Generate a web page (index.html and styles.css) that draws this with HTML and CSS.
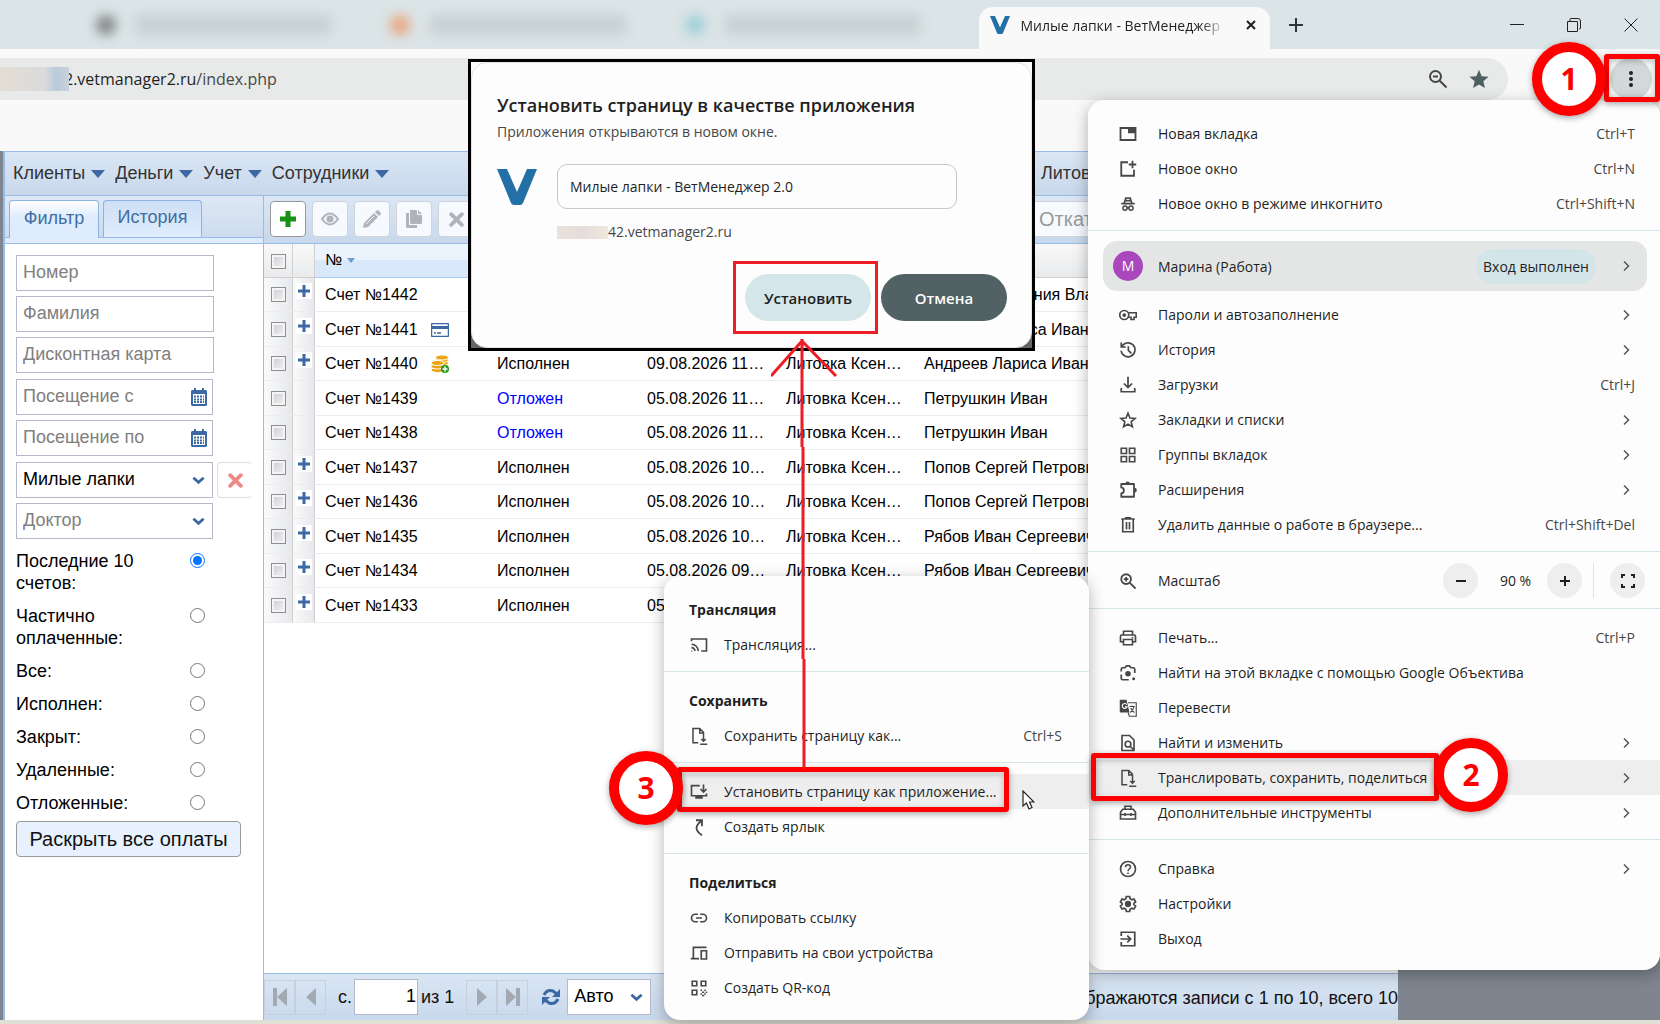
FILE: index.html
```html
<!DOCTYPE html>
<html lang="ru">
<head>
    <meta charset="UTF-8">
    <meta name="viewport" content="width=device-width, initial-scale=1.0">
    <title>Милые лапки - ВетМенеджер 2.0</title>
    <link rel="stylesheet" href="styles.css">
</head>
<body>
    <svg class="sprite" aria-hidden="true">
        <symbol id="chevron" viewBox="0 0 24 24"><path d="M8 3l9 9-9 9" fill="none" stroke="currentColor" stroke-width="3"/></symbol>
        <symbol id="logo" viewBox="0 0 40 36"><path d="M0 0h10l10 23L30 0h10L26 34q-1 2-3 2h-6q-2 0-3-2z" fill="#2270a5"/></symbol>
        <symbol id="plus" viewBox="0 0 12 12"><path d="M6 0v12M0 6h12" stroke="currentColor" stroke-width="3"/></symbol>
        <symbol id="calendar" viewBox="0 0 16 18"><path d="M1 2h2V0h2v2h6V0h2v2h2l1 1v14l-1 1H1l-1-1V3z" fill="#3c69a5"/><path d="M2 6h12v10H2z" fill="#fff"/><path d="M3 8.500h10M3 11.500h10M3 14h10" stroke="#3c69a5" stroke-width="2" stroke-dasharray="2 1"/></symbol>
        <symbol id="down" viewBox="0 0 14 9"><path d="M1.500 1.500L7 6.500l5.500-5" fill="none" stroke="#3c69a5" stroke-width="3"/></symbol>
        <symbol id="savepage" viewBox="0 0 24 24"><path d="M11 21H4V2h9l5 5v5M13 2v6h5M18 12v7M15 16l3 3 3-3M13.500 23H23" fill="none" stroke="currentColor" stroke-width="2"/></symbol>
    </svg>

    <header class="tabstrip">
        <div class="old-tabs">
            <span class="old-tab dim"></span>
            <span class="old-tab dark"></span>
            <span class="old-tab orange"></span>
            <span class="old-tab teal"></span>
        </div>
        <div class="tab">
            <svg class="tab-logo"><use href="#logo"/></svg>
            <span class="tab-title">Милые лапки - ВетМенеджер 2.0</span>
            <button class="plain" aria-label="Закрыть вкладку"><svg width="10" height="10" viewBox="0 0 10 10"><path d="M1 1l8 8M9 1L1 9" stroke="#1f1f1f" stroke-width="2"/></svg></button>
        </div>
        <button class="plain new-tab" aria-label="Новая вкладка"><svg width="14" height="14" viewBox="0 0 14 14"><path d="M7 0v14M0 7h14" stroke="#30383a" stroke-width="2"/></svg></button>
        <div class="window-buttons">
            <button class="plain" aria-label="Свернуть"><svg width="14" height="14" viewBox="0 0 14 14"><path d="M0 6.500h14" stroke="#222"/></svg></button>
            <button class="plain" aria-label="Восстановить"><svg width="14" height="14" viewBox="0 0 14 14"><path d="M.5 3.500h10v10H.5zM3 3V1.500Q3 .5 4 .5h7q2.500 0 2.500 2.500v7q0 1-1.500 1" fill="none" stroke="#222"/></svg></button>
            <button class="plain" aria-label="Закрыть"><svg width="14" height="14" viewBox="0 0 14 14"><path d="M.5.5l13 13M13.500.5l-13 13" stroke="#222"/></svg></button>
        </div>
    </header>

    <div class="toolbar">
        <div class="omnibox">
            <span class="masked"></span>
            <span class="url">2.vetmanager2.ru<span>/index.php</span></span>
            <svg class="zoom-icon" width="20" height="20" viewBox="0 0 20 20"><g fill="none" stroke="#474747" stroke-width="2"><circle cx="7.500" cy="7.500" r="5.500"/><path d="M11.500 11.500l7 7M5 7.500h5"/></g></svg>
            <svg width="20" height="20" viewBox="0 0 24 24"><path d="M12 1l3.200 7.600 8.300.7-6.300 5.400 1.900 8.100L12 18.500l-7.100 4.300 1.900-8.100L.5 9.300l8.300-.7z" fill="#4f6063"/></svg>
        </div>
        <button class="plain dots" aria-label="Меню"><svg width="4" height="18" viewBox="0 0 4 18"><g fill="#222"><circle cx="2" cy="3" r="2"/><circle cx="2" cy="9" r="2"/><circle cx="2" cy="15" r="2"/></g></svg></button>
    </div>

    <div class="bookmarks"></div>

    <main class="desktop">
        <div class="app">
            <nav class="menubar">
                <button class="menu-btn">Клиенты</button>
                <button class="menu-btn">Деньги</button>
                <button class="menu-btn">Учет</button>
                <button class="menu-btn">Сотрудники</button>
                <a class="user" href="#">Литовка Ксения</a>
            </nav>
            <div class="content">
                <aside class="sidebar">
                    <div class="tabs">
                        <button class="side-tab active">Фильтр</button>
                        <button class="side-tab">История</button>
                    </div>
                    <form class="filter">
                        <div class="fields">
                            <input class="field" type="text" aria-label="Номер" placeholder="Номер">
                            <input class="field" type="text" aria-label="Фамилия" placeholder="Фамилия">
                            <input class="field" type="text" aria-label="Дисконтная карта" placeholder="Дисконтная карта">
                        </div>
                        <div class="fields">
                            <div class="with-icon"><input class="field" type="text" aria-label="Посещение с" placeholder="Посещение с"><svg class="cal"><use href="#calendar"/></svg></div>
                            <div class="with-icon"><input class="field" type="text" aria-label="Посещение по" placeholder="Посещение по"><svg class="cal"><use href="#calendar"/></svg></div>
                        </div>
                        <div class="fields">
                            <div class="clinic">
                                <div class="with-icon"><select class="field" aria-label="Клиника"><option>Милые лапки</option></select><svg class="arrow"><use href="#down"/></svg></div>
                                <button type="button" class="reset" aria-label="Очистить"><svg width="15" height="15" viewBox="0 0 14 14"><path d="M2 2l10 10M12 2L2 12" stroke="#ee8a86" stroke-width="3.500" stroke-linecap="round"/></svg></button>
                            </div>
                            <div class="with-icon"><select class="field empty" aria-label="Доктор"><option>Доктор</option></select><svg class="arrow"><use href="#down"/></svg></div>
                        </div>
                        <div class="radios">
                            <label><span>Последние 10 счетов:</span><input type="radio" name="state" checked></label>
                            <label><span>Частично оплаченные:</span><input type="radio" name="state"></label>
                            <label><span>Все:</span><input type="radio" name="state"></label>
                            <label><span>Исполнен:</span><input type="radio" name="state"></label>
                            <label><span>Закрыт:</span><input type="radio" name="state"></label>
                            <label><span>Удаленные:</span><input type="radio" name="state"></label>
                            <label><span>Отложенные:</span><input type="radio" name="state"></label>
                        </div>
                        <button type="button" class="expand">Раскрыть все оплаты</button>
                    </form>
                </aside>

                <section class="grid">
                    <div class="grid-tools">
                        <button class="tool add" aria-label="Добавить"><svg width="16" height="16" viewBox="0 0 16 16"><path d="M8 0v16M0 8h16" stroke="#199316" stroke-width="5"/></svg></button>
                        <button class="tool" aria-label="Просмотр"><svg width="18" height="14" viewBox="0 0 18 14"><path d="M1 7q8-11 16 0-8 11-16 0z" fill="#f4f6fa" stroke="#b0b4b9" stroke-width="2"/><circle cx="9" cy="7" r="3.500" fill="#b0b4b9"/></svg></button>
                        <button class="tool" aria-label="Изменить"><svg width="18" height="18" viewBox="0 0 18 18"><path d="M0 18l1-5L11 3l4 4L5 17zM12 2l1.500-1.500q1-1 2 0l2 2q1 1 0 2L16 6z" fill="#b0b4b9"/><path d="M3 14l8-8" stroke="#f4f6fa"/></svg></button>
                        <button class="tool" aria-label="Копировать"><svg width="16" height="18" viewBox="0 0 16 18"><path d="M0 3h3v12h8v3H1l-1-1zM4 0h7v5h5v8l-1 1H5l-1-1zM12 0l4 4h-4z" fill="#b0b4b9"/></svg></button>
                        <button class="tool" aria-label="Удалить"><svg width="15" height="15" viewBox="0 0 14 14"><path d="M2 2l10 10M12 2L2 12" stroke="#b0b4b9" stroke-width="3.500" stroke-linecap="round"/></svg></button>
                        <button class="tool rollback">Откатить</button>
                    </div>
                    <div class="grid-body">
                        <table>
                            <colgroup><col class="c-check"><col class="c-plus"><col class="c-num"><col class="c-status"><col class="c-date"><col class="c-doc"><col></colgroup>
                            <thead>
                                <tr><th><input type="checkbox" aria-label="Выбрать все"></th><th></th><th class="sorted">№</th><th class="sorted"></th><th class="sorted"></th><th></th><th></th></tr>
                            </thead>
                            <tbody>
                                <tr><td><input type="checkbox" aria-label="1442"></td><td><svg class="plus"><use href="#plus"/></svg></td><td>Счет №1442</td><td></td><td></td><td></td><td>Соколова Евгения Владимировна</td></tr>
                                <tr><td><input type="checkbox" aria-label="1441"></td><td><svg class="plus"><use href="#plus"/></svg></td><td>Счет №1441 <svg class="mark" width="18" height="14" viewBox="0 0 18 14"><rect x=".5" y=".5" width="17" height="13" rx="1" fill="#fff" stroke="#3c69a5" stroke-width="1.500"/><path d="M1 4.500h16" stroke="#3c69a5" stroke-width="3"/><path d="M3 10h2M6 10h4" stroke="#3c69a5" stroke-width="1.500"/></svg></td><td></td><td></td><td></td><td>Андреев Лариса Иванович</td></tr>
                                <tr><td><input type="checkbox" aria-label="1440"></td><td><svg class="plus"><use href="#plus"/></svg></td><td>Счет №1440 <svg class="mark" width="18" height="18" viewBox="0 0 18 18"><g fill="#eba50c" stroke="#fff"><ellipse cx="11" cy="11" rx="6.500" ry="2.500"/><ellipse cx="11" cy="8" rx="6.500" ry="2.500"/><ellipse cx="11" cy="5" rx="6.500" ry="2.500"/><ellipse cx="11" cy="2.500" rx="6.500" ry="2.500"/><ellipse cx="6.500" cy="15" rx="6.500" ry="2.500"/><ellipse cx="6.500" cy="11.500" rx="6.500" ry="2.500"/><ellipse cx="6.500" cy="8" rx="6.500" ry="2.500"/></g><circle cx="14" cy="14" r="4" fill="#2a9a22"/><path d="M14 11.500v5M11.500 14h5" stroke="#fff" stroke-width="1.500"/></svg></td><td>Исполнен</td><td>09.08.2026 11:40</td><td>Литовка Ксения Олеговна</td><td>Андреев Лариса Иванович</td></tr>
                                <tr><td><input type="checkbox" aria-label="1439"></td><td></td><td>Счет №1439</td><td class="hold">Отложен</td><td>05.08.2026 11:35</td><td>Литовка Ксения Олеговна</td><td>Петрушкин Иван</td></tr>
                                <tr><td><input type="checkbox" aria-label="1438"></td><td></td><td>Счет №1438</td><td class="hold">Отложен</td><td>05.08.2026 11:20</td><td>Литовка Ксения Олеговна</td><td>Петрушкин Иван</td></tr>
                                <tr><td><input type="checkbox" aria-label="1437"></td><td><svg class="plus"><use href="#plus"/></svg></td><td>Счет №1437</td><td>Исполнен</td><td>05.08.2026 10:58</td><td>Литовка Ксения Олеговна</td><td>Попов Сергей Петрович</td></tr>
                                <tr><td><input type="checkbox" aria-label="1436"></td><td><svg class="plus"><use href="#plus"/></svg></td><td>Счет №1436</td><td>Исполнен</td><td>05.08.2026 10:43</td><td>Литовка Ксения Олеговна</td><td>Попов Сергей Петрович</td></tr>
                                <tr><td><input type="checkbox" aria-label="1435"></td><td><svg class="plus"><use href="#plus"/></svg></td><td>Счет №1435</td><td>Исполнен</td><td>05.08.2026 10:05</td><td>Литовка Ксения Олеговна</td><td>Рябов Иван Сергеевич</td></tr>
                                <tr><td><input type="checkbox" aria-label="1434"></td><td><svg class="plus"><use href="#plus"/></svg></td><td>Счет №1434</td><td>Исполнен</td><td>05.08.2026 09:50</td><td>Литовка Ксения Олеговна</td><td>Рябов Иван Сергеевич</td></tr>
                                <tr><td><input type="checkbox" aria-label="1433"></td><td><svg class="plus"><use href="#plus"/></svg></td><td>Счет №1433</td><td>Исполнен</td><td>05.08.2026 09:31</td><td></td><td></td></tr>
                            </tbody>
                        </table>
                    </div>
                    <footer class="pager">
                        <button class="page-btn" aria-label="Первая"><svg width="14" height="18" viewBox="0 0 14 18"><path d="M0 0h4v18H0zM14 0v18L4 9z" fill="#a3a9b2"/></svg></button>
                        <button class="page-btn" aria-label="Назад"><svg width="10" height="18" viewBox="0 0 10 18"><path d="M10 0v18L0 9z" fill="#a3a9b2"/></svg></button>
                        <label class="page-no">с. <input class="field" type="text" value="1"></label>
                        <span class="page-of">из 1</span>
                        <button class="page-btn" aria-label="Вперед"><svg width="10" height="18" viewBox="0 0 10 18"><path d="M0 0v18l10-9z" fill="#a3a9b2"/></svg></button>
                        <button class="page-btn" aria-label="Последняя"><svg width="14" height="18" viewBox="0 0 14 18"><path d="M14 0h-4v18h4zM0 0v18l10-9z" fill="#a3a9b2"/></svg></button>
                        <button class="plain refresh" aria-label="Обновить"><svg width="18" height="18" viewBox="0 0 18 18"><g fill="none" stroke="#3c69a5" stroke-width="3"><path d="M2 7q3-6 9-4l4 3M16 11q-3 6-9 4l-4-3"/></g><path d="M18 1v8h-8zM0 17V9h8z" fill="#3c69a5"/></svg></button>
                        <div class="with-icon auto"><select class="field" aria-label="Строк"><option>Авто</option></select><svg class="arrow"><use href="#down"/></svg></div>
                        <span class="total">Отображаются записи с 1 по 10, всего 10</span>
                    </footer>
                </section>
            </div>
        </div>
    </main>

    <div class="menu main-menu">
        <button class="item"><svg class="icon" viewBox="0 0 24 24"><path d="M2 4h20v16H2z" fill="none" stroke="currentColor" stroke-width="2.400"/><path d="M12 4h10v7H12z" fill="currentColor"/></svg>Новая вкладка<kbd>Ctrl+T</kbd></button>
        <button class="item"><svg class="icon" viewBox="0 0 24 24"><path d="M12 3H3v18h17v-8M18 1v10M13 6h10" fill="none" stroke="currentColor" stroke-width="2.400"/></svg>Новое окно<kbd>Ctrl+N</kbd></button>
        <button class="item"><svg class="icon" viewBox="0 0 24 24"><path d="M3 11.500h18M7 11L9 4h6l2 7M8 7.500h8M10 17h4" fill="none" stroke="currentColor" stroke-width="2.200"/><g fill="none" stroke="currentColor" stroke-width="2"><circle cx="8" cy="17.500" r="2.700"/><circle cx="16" cy="17.500" r="2.700"/></g></svg>Новое окно в режиме инкогнито<kbd>Ctrl+Shift+N</kbd></button>
        <hr>
        <button class="profile"><span class="avatar">М</span>Марина (Работа)<span class="signed">Вход выполнен</span><svg class="chev"><use href="#chevron"/></svg></button>
        <button class="item"><svg class="icon" viewBox="0 0 24 24"><g fill="none" stroke="currentColor" stroke-width="2.200"><circle cx="7" cy="12" r="6"/><path d="M12.500 9H23v6h-3v3h-4v-3h-3.500"/></g><circle cx="7" cy="12" r="2.500" fill="currentColor"/></svg>Пароли и автозаполнение<svg class="chev"><use href="#chevron"/></svg></button>
        <button class="item"><svg class="icon" viewBox="0 0 24 24"><path d="M3 2v6h6M3.500 8a9.300 9.300 0 1 1-.7 5M12.500 7v5.500l4 4" fill="none" stroke="currentColor" stroke-width="2.200"/></svg>История<svg class="chev"><use href="#chevron"/></svg></button>
        <button class="item"><svg class="icon" viewBox="0 0 24 24"><path d="M12 1v14M6.500 10l5.500 5.500L17.500 10M3 16v5h18v-5" fill="none" stroke="currentColor" stroke-width="2.300"/></svg>Загрузки<kbd>Ctrl+J</kbd></button>
        <button class="item"><svg class="icon" viewBox="0 0 24 24"><path d="M12 3l2.600 6.300 6.800.6-5.200 4.500 1.600 6.600-5.800-3.500L6.200 21l1.600-6.600-5.200-4.500 6.800-.6z" fill="none" stroke="currentColor" stroke-width="2.200"/></svg>Закладки и списки<svg class="chev"><use href="#chevron"/></svg></button>
        <button class="item"><svg class="icon" viewBox="0 0 24 24"><path d="M3 3h7v7H3zM14 3h7v7h-7zM3 14h7v7H3zM14 14h7v7h-7z" fill="none" stroke="currentColor" stroke-width="2.200"/></svg>Группы вкладок<svg class="chev"><use href="#chevron"/></svg></button>
        <button class="item"><svg class="icon" viewBox="0 0 24 24"><path d="M3 4h17v17H3v-4.500q3.500-.5 3.500-4T3 8.500z" fill="none" stroke="currentColor" stroke-width="2.400" stroke-linejoin="round"/><path d="M8.500 3.500a3 3 0 0 1 6 0zM20.500 9a3 3 0 0 1 0 6.500z" fill="currentColor"/></svg>Расширения<svg class="chev"><use href="#chevron"/></svg></button>
        <button class="item"><svg class="icon" viewBox="0 0 24 24"><path d="M5 5v16h14V5M3 4h18M8 2.500h8M10 8v10M14 8v10" fill="none" stroke="currentColor" stroke-width="2.200"/></svg>Удалить данные о работе в браузере...<kbd>Ctrl+Shift+Del</kbd></button>
        <hr>
        <div class="item zoom-row">
            <svg class="icon" viewBox="0 0 24 24"><path d="M14.500 14.500l7.500 7.500M9.500 6.500v6M6.500 9.500h6" fill="none" stroke="currentColor" stroke-width="2.400"/><circle cx="9.500" cy="9.500" r="6.500" fill="none" stroke="currentColor" stroke-width="2.400"/></svg>Масштаб
            <div class="zoom-controls">
                <button class="round" aria-label="Уменьшить"><svg width="12" height="12" viewBox="0 0 12 12"><path d="M1 6h10" stroke="#1f1f1f" stroke-width="2"/></svg></button>
                <span class="percent">90 %</span>
                <button class="round" aria-label="Увеличить"><svg width="12" height="12" viewBox="0 0 12 12"><path d="M6 1v10M1 6h10" stroke="#1f1f1f" stroke-width="2"/></svg></button>
                <span class="bar"></span>
                <button class="round" aria-label="На весь экран"><svg width="16" height="16" viewBox="0 0 16 16"><path d="M2 5V2h3M11 2h3v3M14 11v3h-3M5 14H2v-3" fill="none" stroke="#1f1f1f" stroke-width="2"/></svg></button>
            </div>
        </div>
        <hr>
        <button class="item"><svg class="icon" viewBox="0 0 24 24"><path d="M6 8V3h12v5M6 17H2V9.500Q2 8 3.500 8h17Q22 8 22 9.500V17h-4M6 14h12v7H6z" fill="none" stroke="currentColor" stroke-width="2.200"/><path d="M17 10.500h2v2h-2z" fill="currentColor"/></svg>Печать...<kbd>Ctrl+P</kbd></button>
        <button class="item"><svg class="icon" viewBox="0 0 24 24"><path d="M3 10V7q0-2 2-2h3l2-2.500h4L16 5h3q2 0 2 2v5M3 14v5q0 2 2 2h8" fill="none" stroke="currentColor" stroke-width="2.300"/><circle cx="12" cy="13" r="3.700" fill="currentColor"/><circle cx="19.500" cy="19.500" r="2" fill="currentColor"/></svg>Найти на этой вкладке с помощью Google Объектива</button>
        <button class="item"><svg class="icon" viewBox="0 0 24 24"><path d="M1 1h9l4 17H2q-1 0-1-1z" fill="currentColor"/><path d="M10.500 7.500a3.300 3.300 0 1 0 .3 3H8" fill="none" stroke="#fdfdfd" stroke-width="1.500"/><path d="M12 5h11v18h-9l-2-5M14 10h7M17.500 8.500V10M20 10q-1 5-5 8M15.500 12q2 4 5 6" fill="none" stroke="currentColor" stroke-width="1.500"/></svg>Перевести</button>
        <button class="item"><svg class="icon" viewBox="0 0 24 24"><path d="M14 2H4v20h16V8zM15.500 17l4 4" fill="none" stroke="currentColor" stroke-width="2.200"/><circle cx="12" cy="13.500" r="3.800" fill="none" stroke="currentColor" stroke-width="2.200"/></svg>Найти и изменить<svg class="chev"><use href="#chevron"/></svg></button>
        <button class="item hover"><svg class="icon"><use href="#savepage"/></svg>Транслировать, сохранить, поделиться<svg class="chev"><use href="#chevron"/></svg></button>
        <button class="item"><svg class="icon" viewBox="0 0 24 24"><path d="M8 7V3h8v4M5 7h14l3 4v9H2v-9zM2 14h20M8 12v4M16 12v4" fill="none" stroke="currentColor" stroke-width="2.200"/></svg>Дополнительные инструменты<svg class="chev"><use href="#chevron"/></svg></button>
        <hr>
        <button class="item"><svg class="icon" viewBox="0 0 24 24"><circle cx="12" cy="12" r="10" fill="none" stroke="currentColor" stroke-width="2.200"/><path d="M8.700 9.500q0-3.300 3.300-3.300t3.300 3q0 1.500-1.700 2.800T12 15M12 16.500v2.300" fill="none" stroke="currentColor" stroke-width="2"/></svg>Справка<svg class="chev"><use href="#chevron"/></svg></button>
        <button class="item"><svg class="icon" viewBox="0 0 24 24"><path d="M9.800 2h4.400l.6 3 2.300 1.300 2.900-1 2.200 3.800-2.300 2v1.800l2.300 2-2.200 3.800-2.900-1-2.300 1.300-.6 3H9.800l-.6-3-2.300-1.300-2.900 1-2.200-3.800 2.300-2v-1.800l-2.300-2L4 5.300l2.900 1L9.200 5z" fill="none" stroke="currentColor" stroke-width="2.200"/><circle cx="12" cy="12" r="4.200" fill="currentColor"/></svg>Настройки</button>
        <button class="item"><svg class="icon" viewBox="0 0 24 24"><path d="M3 8V3h18v18H3v-5M2 12h13M11 7.500l4.500 4.500-4.500 4.500" fill="none" stroke="currentColor" stroke-width="2.300"/></svg>Выход</button>
    </div>

    <div class="menu sub-menu">
        <h3>Трансляция</h3>
        <button class="item"><svg class="icon" viewBox="0 0 24 24"><path d="M2 7V4h20v16h-7M2 20h1M2 15.500A4.500 4.500 0 0 1 6.500 20M2 11a9 9 0 0 1 9 9" fill="none" stroke="currentColor" stroke-width="2.200"/></svg>Трансляция...</button>
        <hr>
        <h3>Сохранить</h3>
        <button class="item"><svg class="icon"><use href="#savepage"/></svg>Сохранить страницу как...<kbd>Ctrl+S</kbd></button>
        <hr>
        <button class="item hover"><svg class="icon" viewBox="0 0 24 24"><path d="M13 3.500H2V17h20v-3M18 2v9M14 8l4 4 4-4" fill="none" stroke="currentColor" stroke-width="2.200"/><path d="M7 17h10v4H7z" fill="currentColor"/></svg>Установить страницу как приложение...</button>
        <button class="item"><svg class="icon" viewBox="0 0 24 24"><path d="M8 3h8v8M15 4Q2 14 16 23" fill="none" stroke="currentColor" stroke-width="2.400"/></svg>Создать ярлык</button>
        <hr>
        <h3>Поделиться</h3>
        <button class="item"><svg class="icon" viewBox="0 0 24 24"><path d="M10.500 7H7a5 5 0 0 0 0 10h3.500M13.500 7H17a5 5 0 0 1 0 10h-3.500M8 12h8" fill="none" stroke="currentColor" stroke-width="2.200"/></svg>Копировать ссылку</button>
        <button class="item"><svg class="icon" viewBox="0 0 24 24"><path d="M4.500 19V4.500H22M1 19.500h11M15 9h7v11h-7z" fill="none" stroke="currentColor" stroke-width="2.200"/></svg>Отправить на свои устройства</button>
        <button class="item"><svg class="icon" viewBox="0 0 24 24"><path d="M3 3h6v6H3zM15 3h6v6h-6zM3 15h6v6H3z" fill="none" stroke="currentColor" stroke-width="2.200"/><path d="M14 15h2M19 15h2M16 17.500h3M21 17.500h2M14 20h2M19 20h2M16 22h3" stroke="currentColor" stroke-width="2"/></svg>Создать QR-код</button>
    </div>

    <div class="dialog-frame">
        <form class="dialog">
            <h2>Установить страницу в качестве приложения</h2>
            <p>Приложения открываются в новом окне.</p>
            <div class="dialog-row">
                <svg class="dialog-logo"><use href="#logo"/></svg>
                <input type="text" aria-label="Название приложения" value="Милые лапки - ВетМенеджер 2.0">
            </div>
            <div class="host"><span class="masked"></span>42.vetmanager2.ru</div>
            <div class="dialog-buttons">
                <button type="button" class="install">Установить</button>
                <button type="button" class="cancel">Отмена</button>
            </div>
        </form>
    </div>

    <!-- пометки инструкции -->
    <div class="frame frame-dots"></div>
    <div class="frame frame-share"></div>
    <div class="frame frame-item"></div>
    <div class="thin-frame"></div>
    <svg class="pointer-line" width="68" height="432" viewBox="0 0 68 432"><path d="M31 2L0 37M31 2l34 35M31 0v108M32 108v212M33 320v110" fill="none" stroke="#ee1c25" stroke-width="3"/></svg>
    <div class="step step-1">1</div>
    <div class="step step-2">2</div>
    <div class="step step-3">3</div>
    <svg class="cursor" width="13" height="20" viewBox="0 0 13 20"><path d="M1 1v15l3.500-3 2.500 6 3-1.500-2.500-5.500h4.500z" fill="#fff" stroke="#222" stroke-width="1.200"/></svg>
</body>
</html>
```
FILE: styles.css
```css
* {
    box-sizing: border-box;
}

body {
    margin: 0;
    height: 100vh;
    display: flex;
    flex-direction: column;
    position: relative;
    overflow: hidden;
    background: #dfe1d7;
    font-family: "Open Sans", "Noto Sans", sans-serif;
    font-size: 14px;
    color: #1f1f1f;
}

button, input, select {
    font: inherit;
    color: inherit;
    margin: 0;
}

.sprite {
    display: none;
}

.plain {
    display: flex;
    align-items: center;
    justify-content: center;
    padding: 0;
    border: 0;
    background: none;
}

/* browser */
.tabstrip {
    flex: none;
    height: 49px;
    display: flex;
    background: #dbe4e6;
}

.old-tabs {
    flex: none;
    width: 59%;
    display: flex;
    align-items: center;
    padding-left: 50px;
    overflow: hidden;
}

.old-tab {
    flex: 1;
    height: 20px;
    filter: blur(6px);
    background: linear-gradient(90deg, transparent 40px, #c8d1d3 40px, #c8d1d3 80%, transparent 80%);
}

.old-tab::before {
    content: "";
    display: block;
    width: 20px;
    height: 20px;
    border-radius: 10px;
}

.old-tab.dim {
    flex: 0 0 46px;
    background: none;
}

.old-tab.dark::before {
    background: #7d8485;
}

.old-tab.orange::before {
    background: #e8a57e;
}

.old-tab.teal::before {
    background: #9ccfd8;
}

.tab {
    flex: none;
    width: 291px;
    height: 42px;
    margin-top: 7px;
    padding: 0 14px 6px 11px;
    display: flex;
    align-items: center;
    background: #f9f9f9;
    border-radius: 14px 14px 0 0;
}

.tab-logo {
    flex: none;
    width: 20px;
    height: 18px;
    margin-right: 10px;
}

.tab-title {
    flex: 1;
    overflow: hidden;
    white-space: nowrap;
    margin-right: 20px;
    -webkit-mask-image: linear-gradient(90deg, #000 88%, transparent);
    mask-image: linear-gradient(90deg, #000 88%, transparent);
}

.new-tab {
    width: 52px;
}

.window-buttons {
    margin-left: auto;
    margin-right: 1px;
    display: flex;
}

.window-buttons .plain {
    width: 57px;
}

.toolbar {
    flex: none;
    height: 60px;
    padding: 0 8px 0 0;
    display: flex;
    align-items: center;
    justify-content: space-between;
    background: #f9f9f9;
}

.omnibox {
    flex: 1;
    margin-right: 102px;
    height: 42px;
    padding-right: 19px;
    display: flex;
    align-items: center;
    background: #e8eae9;
    border-radius: 0 21px 21px 0;
    font-size: 16px;
}

.omnibox .masked {
    z-index: 1;
    width: 69px;
    height: 24px;
    background: linear-gradient(90deg, #e3ddd4, #dadbdc 65%, #b9cadb 80%, #c8d2da);
}

.url {
    flex: 1;
    margin-left: -5px;
    white-space: nowrap;
}

.url span {
    color: #474747;
}

.zoom-icon {
    margin-right: 21px;
}

.dots {
    width: 42px;
    height: 42px;
    border-radius: 21px;
    background: #d2d9d9;
}

.bookmarks {
    flex: none;
    height: 42px;
    background: #f9f9f9;
}

/* VetManager */
.desktop {
    flex: 1;
    min-height: 0;
    display: flex;
    margin-bottom: 4px;
    padding: 0 262px 0 3px;
    background: #7e858f;
    font-family: "Liberation Sans", Arial, sans-serif;
    font-size: 18px;
}

.app {
    flex: 1;
    min-width: 0;
    display: flex;
    flex-direction: column;
    background: #fff;
    border: 1px solid #99bbe8;
    border-width: 1px 0 0 2px;
}

.menubar {
    flex: none;
    height: 44px;
    display: flex;
    align-items: center;
    gap: 10px;
    padding-left: 8px;
    background: linear-gradient(#dae6f4, #c8d8ec);
    border-bottom: 1px solid #99bbe8;
}

.menu-btn {
    display: flex;
    align-items: center;
    gap: 6px;
    padding: 0;
    border: 0;
    background: none;
    color: #333;
}

.menu-btn::after {
    content: "";
    border: 7px solid transparent;
    border-top: 8px solid #3c69a5;
    border-bottom: 0;
}

.user {
    width: 357px;
    margin-left: auto;
    color: #333;
    text-decoration: none;
}

.content {
    flex: 1;
    min-height: 0;
    display: flex;
}

.sidebar {
    flex: none;
    width: 259px;
    border-right: 1px solid #99bbe8;
}

.tabs {
    display: flex;
    gap: 4px;
    height: 48px;
    padding: 4px 4px 0;
    border-bottom: 1px solid #99bbe8;
    background: linear-gradient(#dee8f5, #cddbee 41px, #99bbe8 41px, #99bbe8 42px, #deecfd 42px);
}

.side-tab {
    height: 37px;
    width: 99px;
    padding: 0 0 3px;
    border: 1px solid #8db2e3;
    border-bottom: 0;
    border-radius: 4px 4px 0 0;
    background: linear-gradient(#cfdff5, #deecfd);
    color: #416da3;
}

.side-tab.active {
    width: 90px;
    height: 38px;
    background: linear-gradient(#fff, #deecfd 16px);
}

.filter {
    display: flex;
    flex-direction: column;
    align-items: flex-start;
    padding: 11px 10px 0 11px;
}

.fields {
    display: flex;
    flex-direction: column;
    gap: 5px;
    margin-bottom: 6px;
}

.field {
    display: block;
    width: 198px;
    height: 36px;
    padding: 0 6px 2px;
    border: 1px solid #b5b8c8;
    border-radius: 0;
    background: #fff;
    color: #000;
    outline: 0;
    appearance: none;
}

.field::placeholder, .field.empty {
    color: #808080;
}

.with-icon {
    position: relative;
    width: 197px;
}

.with-icon .field {
    width: 100%;
}

.cal {
    position: absolute;
    right: 6px;
    top: 9px;
    width: 16px;
    height: 18px;
}

.arrow {
    position: absolute;
    right: 8px;
    top: 14px;
    width: 13px;
    height: 9px;
}

.clinic {
    display: flex;
    gap: 4px;
}

.reset {
    width: 35px;
    height: 36px;
    padding: 0;
    border: 1px solid #ddd;
    border-right: 0;
    border-radius: 4px;
    background: #fff;
    line-height: 0;
}

.radios {
    display: flex;
    flex-direction: column;
    gap: 11px;
    margin: 5px 0 7px;
    color: #000;
}

.radios label {
    display: flex;
    align-items: flex-start;
    line-height: 22px;
}

.radios span {
    width: 174px;
    padding-right: 40px;
}

.radios input {
    width: 15px;
    height: 15px;
    margin-top: 3px;
}

.expand {
    height: 36px;
    width: 225px;
    padding: 0;
    border: 1px solid #999;
    border-radius: 4px;
    background: #e8f1fe;
    color: #111;
    font-size: 20px;
    white-space: nowrap;
}

.grid {
    flex: 1;
    min-width: 0;
    display: flex;
    flex-direction: column;
    background: #fff;
}

.grid-tools {
    flex: none;
    height: 48px;
    display: flex;
    align-items: center;
    gap: 6px;
    padding: 0 0 1px 6px;
    background: linear-gradient(#dae6f4, #c8d8ec);
    border-bottom: 1px solid #99bbe8;
}

.tool {
    flex: none;
    width: 36px;
    height: 36px;
    padding: 0;
    border: 1px solid #d0d3d8;
    border-radius: 4px;
    background: #f6f9fd;
    line-height: 0;
}

.tool.add {
    background: #fff;
    border-color: #999;
}

.tool.rollback {
    width: 370px;
    margin-left: auto;
    padding-left: 10px;
    text-align: left;
    font-size: 20px;
    color: #999;
}

.grid-body {
    flex: 1;
    min-height: 0;
    overflow: hidden;
}

table {
    width: 100%;
    table-layout: fixed;
    border-collapse: separate;
    border-spacing: 0;
    font-size: 16px;
    color: #000;
}

.c-check { width: 29px; }
.c-plus { width: 22px; }
.c-num { width: 172px; }
.c-status { width: 150px; }
.c-date { width: 139px; }
.c-doc { width: 138px; }

th {
    height: 34px;
    padding: 0 10px 2px;
    border-bottom: 1px solid #d0d0d0;
    background: linear-gradient(#f9f9f9, #f2f2f3 50%, #e9eaec);
    font-weight: normal;
    text-align: left;
}

th:nth-child(1), th:nth-child(2) {
    padding: 0;
    border-right: 1px solid #d0d0d0;
    text-align: center;
}

th.sorted {
    border-color: #aaccf6;
    background: linear-gradient(#ebf3fd 50%, #d9e8fb 50%);
}

th:nth-child(3)::after {
    content: "";
    display: inline-block;
    margin: 0 0 2px 5px;
    border: 4px solid transparent;
    border-top: 5px solid #6b9ad6;
    border-bottom: 0;
}

td {
    height: 34px;
    padding: 1px 10px 0;
    border-bottom: 1px solid #ededed;
    overflow: hidden;
    text-overflow: ellipsis;
    white-space: nowrap;
}

tr:nth-child(even) td {
    height: 35px;
}

td:nth-child(1), td:nth-child(2) {
    padding: 0;
    border-right: 1px solid #d0d0d0;
    background: linear-gradient(90deg, #fafafa, #e6e8ec);
    text-align: center;
    line-height: 0;
}

td.hold {
    color: #00f;
}

.plus {
    display: block;
    width: 16px;
    height: 16px;
    margin: -7px auto 0;
    padding: 2px;
    background: #fff;
    color: #3c69a5;
}

.mark {
    margin-left: 9px;
    vertical-align: middle;
}

input[type="checkbox"] {
    appearance: none;
    width: 15px;
    height: 15px;
    border: 1px solid #8e8f8f;
    background: linear-gradient(135deg, #c9ccd3, #f3f3f3);
    box-shadow: inset 0 0 0 2px #f4f4f4;
    vertical-align: middle;
}

.pager {
    flex: none;
    height: 47px;
    display: flex;
    align-items: center;
    background: linear-gradient(#dae6f4, #c8d8ec);
    border-top: 1px solid #99bbe8;
    color: #111;
    white-space: nowrap;
}

.page-btn {
    flex: none;
    width: 31px;
    height: 35px;
    padding: 0;
    border: 1px solid #c8cfd8;
    background: none;
    line-height: 0;
}

.page-no {
    display: flex;
    align-items: center;
    gap: 2px;
    margin-left: 12px;
}

.page-no .field {
    width: 64px;
    padding: 0 1px 2px;
    text-align: right;
}

.page-of {
    margin: 0 12px 0 3px;
}

.refresh {
    flex: none;
    margin: 0 7px 0 14px;
}

.pager .auto {
    flex: none;
    width: 84px;
}

.total {
    margin-left: auto;
    padding-top: 2px;
}

/* menus */
.menu {
    position: absolute;
    background: #fdfdfd;
    border-radius: 16px;
    box-shadow: 0 4px 16px rgba(0, 0, 0, 0.3);
}

.main-menu {
    top: 100px;
    right: 0;
    width: 572px;
    padding: 16px 0 14px;
}

.sub-menu {
    top: 576px;
    right: 571px;
    width: 425px;
    padding: 16px 0 15px;
}

.menu hr {
    height: 1px;
    margin: 9px 0 11px;
    border: 0;
    background: #d5e5ea;
}

.menu h3 {
    margin: 0;
    padding-left: 25px;
    font-size: 14px;
    font-weight: 700;
    line-height: 35px;
}

.item {
    display: flex;
    align-items: center;
    width: 100%;
    height: 35px;
    padding: 0 25px 0 31px;
    border: 0;
    background: none;
    text-align: left;
    white-space: nowrap;
}

.item.hover {
    background: #eee;
}

.icon {
    flex: none;
    width: 18px;
    height: 18px;
    margin-right: 21px;
    color: #474747;
}

.sub-menu .item {
    padding: 0 27px 0 26px;
}

.sub-menu .icon {
    margin-right: 16px;
}

.item kbd {
    margin-left: auto;
    font: inherit;
    color: #474747;
}

.chev {
    width: 12px;
    height: 12px;
    margin-left: auto;
    margin-right: 3px;
    color: #555;
}

.profile {
    display: flex;
    align-items: center;
    width: 544px;
    height: 50px;
    margin: -1px 0 6px 15px;
    padding: 0 12px 0 10px;
    border: 0;
    border-radius: 14px;
    background: #e4e6e5;
    text-align: left;
}

.profile .chev {
    margin-left: 24px;
}

.avatar {
    width: 30px;
    margin-right: 15px;
    border-radius: 15px;
    background: #ab47bc;
    color: #fff;
    line-height: 30px;
    text-align: center;
}

.signed {
    margin-left: auto;
    width: 120px;
    border-radius: 17px;
    background: #d4e5e9;
    line-height: 35px;
    text-align: center;
}

.zoom-row {
    height: 36px;
    padding-right: 15px;
    padding-bottom: 1px;
}

.zoom-controls {
    margin-left: auto;
    display: flex;
    align-items: center;
}

.round {
    width: 35px;
    height: 35px;
    padding: 0;
    border: 0;
    border-radius: 18px;
    background: #efeeef;
    line-height: 0;
}

.percent {
    width: 69px;
    padding-left: 6px;
    text-align: center;
}

.bar {
    width: 1px;
    height: 35px;
    margin: 0 16px 0 11px;
    background: #d5e5ea;
}

/* install dialog */
.dialog-frame {
    position: absolute;
    top: 59px;
    left: 468px;
    width: 567px;
    border: 3px solid #000;
    background: linear-gradient(#f9f9f9 50%, #666 50%);
}

.dialog {
    padding: 29px 24px 26px 25px;
    border: 1px solid #e2e2e2;
    border-radius: 16px;
    background: #fdfdfd;
}

.dialog h2 {
    margin: 0;
    font-size: 18px;
    font-weight: 600;
    line-height: 26px;
}

.dialog p {
    margin: 3px 0 21px;
    line-height: 22px;
    color: #474747;
}

.dialog-row {
    display: flex;
    align-items: center;
    gap: 20px;
}

.dialog-logo {
    width: 40px;
    height: 36px;
}

.dialog-row input {
    width: 400px;
    height: 45px;
    padding: 0 12px;
    border: 1px solid #c7c7c7;
    border-radius: 10px;
    background: #fdfdfd;
}

.host {
    display: flex;
    align-items: center;
    margin: 11px 0 30px 60px;
    line-height: 24px;
    color: #474747;
}

.host .masked {
    width: 51px;
    height: 13px;
    background: linear-gradient(90deg, #eae2da, #e3dcdb 50%, #f1e8dc);
}

.dialog-buttons {
    display: flex;
    justify-content: flex-end;
    gap: 10px;
}

.dialog-buttons button {
    width: 126px;
    height: 47px;
    border: 0;
    border-radius: 24px;
    font-size: 15px;
    font-weight: 600;
}

.install {
    background: #d4e6ea;
}

.cancel {
    background: #526163;
    color: #fff;
}

/* marks */
.frame {
    position: absolute;
    border: 5px solid #f00;
    border-radius: 3px;
    box-shadow: 0 2px 6px rgba(0, 0, 0, 0.35), inset 0 2px 6px rgba(0, 0, 0, 0.25);
}

.frame-dots {
    top: 54px;
    right: 0;
    width: 56px;
    height: 48px;
}

.frame-share {
    top: 753px;
    right: 221px;
    width: 348px;
    height: 48px;
}

.frame-item {
    top: 767px;
    right: 651px;
    width: 332px;
    height: 45px;
}

.thin-frame {
    position: absolute;
    top: 261px;
    left: 733px;
    width: 145px;
    height: 73px;
    border: 3px solid #ee1c25;
}

.pointer-line {
    position: absolute;
    top: 339px;
    left: 771px;
}

.step {
    position: absolute;
    width: 74px;
    height: 74px;
    border: 10px solid #f00;
    border-radius: 37px;
    background: #fff;
    box-shadow: 0 2px 6px rgba(0, 0, 0, 0.35);
    color: #f00;
    font-size: 30px;
    font-weight: 700;
    line-height: 54px;
    text-align: center;
}

.step-1 {
    top: 42px;
    right: 54px;
}

.step-2 {
    top: 738px;
    right: 152px;
}

.step-3 {
    top: 751px;
    right: 977px;
}

.cursor {
    position: absolute;
    top: 790px;
    right: 625px;
}
```
